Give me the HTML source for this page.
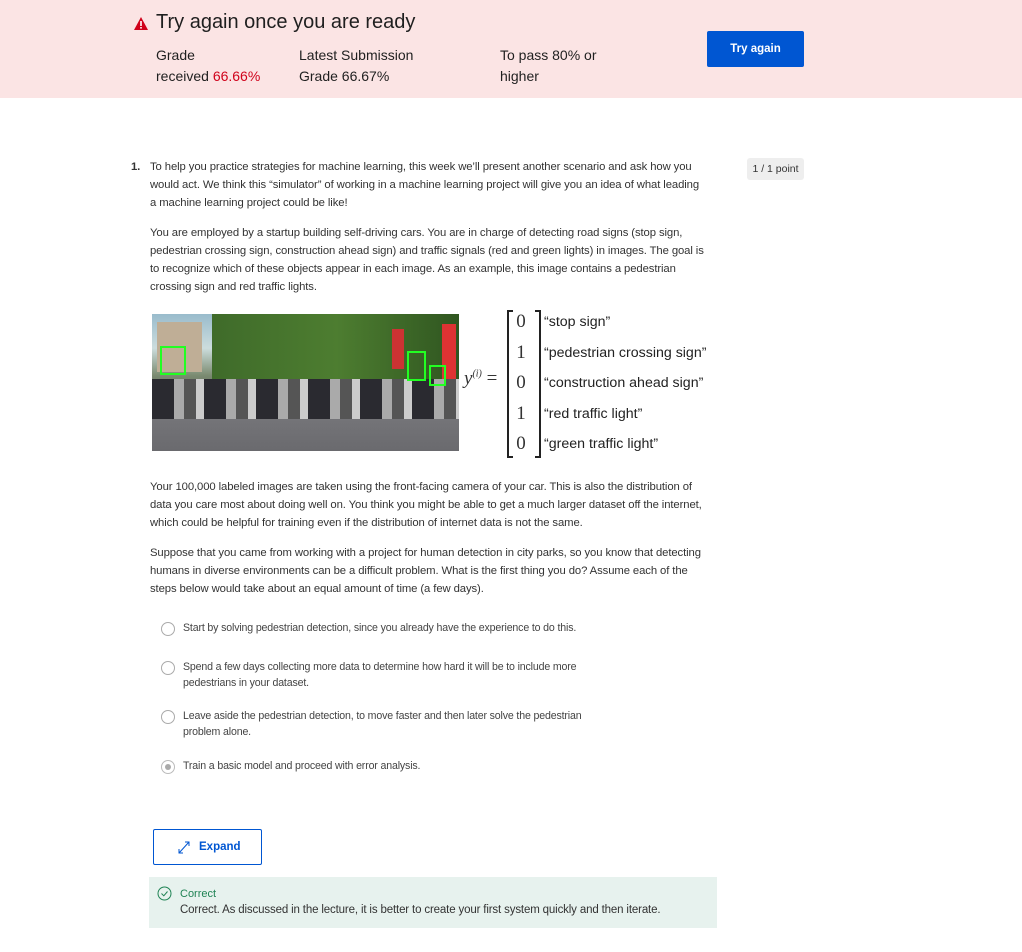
<!DOCTYPE html>
<html><head><meta charset="utf-8"><style>
*{margin:0;padding:0;box-sizing:border-box}
body{width:1022px;height:952px;background:#fff;font-family:"Liberation Sans",sans-serif;color:#333;position:relative;overflow:hidden}
.banner{position:absolute;left:0;top:0;width:1022px;height:98px;background:#fbe4e4}
.abs{position:absolute}
.p{font-size:11.3px;line-height:18px;color:#333;letter-spacing:-0.1px;white-space:nowrap}
.opt{font-size:10.6px;line-height:16px;color:#444;letter-spacing:-0.15px;white-space:nowrap}
.radio{position:absolute;width:14px;height:14px;border:1.5px solid #aaa;border-radius:50%;background:#fff}
</style></head><body>
<div class="banner"></div>
<svg class="abs" style="left:133px;top:16px" width="16" height="15" viewBox="0 0 16 15"><path d="M8 1 L15 14 L1 14 Z" fill="#d0021b"/><rect x="7.2" y="5" width="1.6" height="5" fill="#fff"/><rect x="7.2" y="11" width="1.6" height="1.6" fill="#fff"/></svg>
<div class="abs" style="left:156px;top:11px;font-size:20px;color:#1f1f1f">Try again once you are ready</div>
<div class="abs" style="left:156px;top:45px;font-size:14px;line-height:21px;color:#1f1f1f">Grade<br>received <span style="color:#d0021b">66.66%</span></div>
<div class="abs" style="left:299px;top:45px;font-size:14px;line-height:21px;color:#1f1f1f">Latest Submission<br>Grade 66.67%</div>
<div class="abs" style="left:500px;top:45px;font-size:14px;line-height:21px;color:#1f1f1f">To pass 80% or<br>higher</div>
<div class="abs" style="left:707px;top:31px;width:97px;height:36px;background:#0056d2;border-radius:2px;color:#fff;font-size:11.5px;font-weight:bold;text-align:center;line-height:36px">Try again</div>

<div class="abs p" style="left:131px;top:158px;font-weight:bold">1.</div>
<div class="abs p" style="left:150px;top:158px">To help you practice strategies for machine learning, this week we’ll present another scenario and ask how you<br>would act. We think this “simulator” of working in a machine learning project will give you an idea of what leading<br>a machine learning project could be like!</div>
<div class="abs" style="left:747px;top:158px;width:57px;height:22px;background:#eee;border-radius:3px;font-size:10.5px;line-height:22px;text-align:center;color:#333">1 / 1 point</div>
<div class="abs p" style="left:150px;top:224px">You are employed by a startup building self-driving cars. You are in charge of detecting road signs (stop sign,<br>pedestrian crossing sign, construction ahead sign) and traffic signals (red and green lights) in images. The goal is<br>to recognize which of these objects appear in each image. As an example, this image contains a pedestrian<br>crossing sign and red traffic lights.</div>

<div class="abs" style="left:152px;top:314px;width:307px;height:137px;overflow:hidden;background:linear-gradient(#9bc 0%,#cdd 25%,#7a8a70 45%,#666 62%,#777 100%)">
<div class="abs" style="left:60px;top:0;width:250px;height:85px;background:linear-gradient(90deg,#3f6b2a,#4d7d30,#2f5520)"></div>
<div class="abs" style="left:5px;top:8px;width:45px;height:50px;background:#bfae96"></div>
<div class="abs" style="left:0;top:80px;width:307px;height:57px;background:linear-gradient(#7c7c80,#6a6a6e)"></div>
<div class="abs" style="left:0;top:65px;width:307px;height:40px;background:repeating-linear-gradient(90deg,#2a2a30 0 22px,#aaa 22px 32px,#555 32px 44px,#ccc 44px 52px)"></div>
<div class="abs" style="left:240px;top:15px;width:12px;height:40px;background:#c33"></div>
<div class="abs" style="left:290px;top:10px;width:14px;height:55px;background:#d33"></div>
<div class="abs" style="left:8px;top:32px;width:26px;height:29px;border:2px solid #2f2"></div>
<div class="abs" style="left:255px;top:37px;width:19px;height:30px;border:2px solid #2f2"></div>
<div class="abs" style="left:277px;top:51px;width:17px;height:21px;border:2px solid #2f2"></div>
</div>
<div class="abs" style="left:464px;top:368px;font-family:'Liberation Serif',serif;font-size:19px;font-style:italic">y<sup style="font-size:10px">(i)</sup> <span style="font-style:normal">=</span></div>
<div class="abs" style="left:507px;top:310px;width:34px;height:148px;border:2px solid #222"></div>
<div class="abs" style="left:513px;top:308px;width:22px;height:152px;background:#fff"></div>
<div class="abs" style="left:513px;top:307px;font-family:'Liberation Serif',serif;font-size:19px;line-height:30.5px;width:16px;text-align:center">0<br>1<br>0<br>1<br>0</div>
<div class="abs" style="left:544px;top:307px;font-size:14.2px;line-height:30.5px;color:#222">“stop sign”<br>“pedestrian crossing sign”<br>“construction ahead sign”<br>“red traffic light”<br>“green traffic light”</div>

<div class="abs p" style="left:150px;top:478px">Your 100,000 labeled images are taken using the front-facing camera of your car. This is also the distribution of<br>data you care most about doing well on. You think you might be able to get a much larger dataset off the internet,<br>which could be helpful for training even if the distribution of internet data is not the same.</div>
<div class="abs p" style="left:150px;top:544px">Suppose that you came from working with a project for human detection in city parks, so you know that detecting<br>humans in diverse environments can be a difficult problem. What is the first thing you do? Assume each of the<br>steps below would take about an equal amount of time (a few days).</div>

<div class="radio" style="left:161px;top:622px"></div>
<div class="abs opt" style="left:183px;top:620px">Start by solving pedestrian detection, since you already have the experience to do this.</div>
<div class="radio" style="left:161px;top:661px"></div>
<div class="abs opt" style="left:183px;top:659px">Spend a few days collecting more data to determine how hard it will be to include more<br>pedestrians in your dataset.</div>
<div class="radio" style="left:161px;top:710px"></div>
<div class="abs opt" style="left:183px;top:708px">Leave aside the pedestrian detection, to move faster and then later solve the pedestrian<br>problem alone.</div>
<div class="radio" style="left:161px;top:760px;border-color:#bbb"><div style="position:absolute;left:2.5px;top:2.5px;width:6px;height:6px;border-radius:50%;background:#aaa"></div></div>
<div class="abs opt" style="left:183px;top:758px">Train a basic model and proceed with error analysis.</div>

<div class="abs" style="left:153px;top:829px;width:109px;height:36px;border:1px solid #0056d2;border-radius:2px"></div>
<svg class="abs" style="left:177px;top:839px" width="14" height="16" viewBox="0 0 14 16"><path d="M2 14 L12 3 M8 3 H12 V7 M2 10 V14 H6" stroke="#0056d2" stroke-width="1" fill="none"/></svg>
<div class="abs" style="left:199px;top:839px;font-size:11.5px;color:#0056d2;font-weight:bold;line-height:16px">Expand</div>

<div class="abs" style="left:149px;top:877px;width:568px;height:51px;background:#e7f2ee"></div>
<svg class="abs" style="left:157px;top:886px" width="15" height="15" viewBox="0 0 15 15"><circle cx="7.5" cy="7.5" r="6.5" stroke="#1f8354" fill="none"/><path d="M4.5 7.5 L6.8 9.8 L10.5 5.5" stroke="#1f8354" fill="none"/></svg>
<div class="abs" style="left:180px;top:886px;font-size:11px;color:#1f8354;line-height:16px">Correct</div>
<div class="abs" style="left:180px;top:902px;font-size:11.5px;color:#333;line-height:16px;letter-spacing:-0.15px;white-space:nowrap">Correct. As discussed in the lecture, it is better to create your first system quickly and then iterate.</div>
</body></html>
